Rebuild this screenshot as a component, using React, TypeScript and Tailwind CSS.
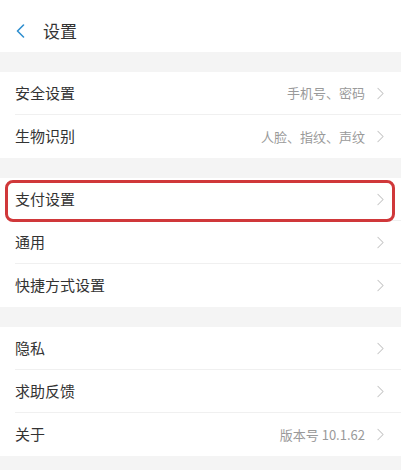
import React from 'react';

type Item = { label: string; value?: string; highlight?: boolean };

const groups: Item[][] = [
  [
    { label: '安全设置', value: '手机号、密码' },
    { label: '生物识别', value: '人脸、指纹、声纹' },
  ],
  [
    { label: '支付设置', highlight: true },
    { label: '通用' },
    { label: '快捷方式设置' },
  ],
  [
    { label: '隐私' },
    { label: '求助反馈' },
    { label: '关于', value: '版本号 10.1.62' },
  ],
];

const Chevron = ({ className }: { className?: string }) => (
  <svg viewBox="0 0 8 14" className={className} fill="none" stroke="currentColor" strokeWidth="1.2" strokeLinecap="round" strokeLinejoin="round">
    <path d="M1 1l6 6-6 6" />
  </svg>
);

const Row = ({ item, last }: { item: Item; last: boolean }) => (
  <div className="relative h-[43px] flex items-center pl-[15px]">
    {item.highlight && (
      <div className="absolute left-[5px] right-[6px] top-[2px] bottom-[-1px] rounded-[8px] border-[3px] border-[#d0383a] pointer-events-none" />
    )}
    <div className={`flex-1 h-full flex items-center pr-[17px] ${last ? '' : 'border-b border-[#f0f0f0]'}`}>
      <span className="flex-1 text-[15px] text-[#333333]">{item.label}</span>
      {item.value && <span className="text-[13px] text-[#9a9a9a] mr-[12px]">{item.value}</span>}
      <Chevron className="w-[7px] h-[13px] text-[#c4c4c4]" />
    </div>
  </div>
);

export default function App() {
  return (
    <div className="w-[401px] h-[470px] bg-[#f4f4f4] overflow-hidden" style={{ fontFamily: '"Noto Sans CJK SC", "Noto Sans", sans-serif' }}>
      <div className="h-[52px] bg-white flex items-center pl-[16px] pt-[9px]">
        <svg viewBox="0 0 9 14" className="w-[9px] h-[14px] text-[#2f8fcf]" fill="none" stroke="currentColor" strokeWidth="1.6" strokeLinecap="round" strokeLinejoin="round">
          <path d="M7.5 1L1.5 7l6 6" />
        </svg>
        <span className="ml-[18px] text-[17px] text-[#333333]">设置</span>
      </div>
      <div className="flex flex-col gap-[20px] pt-[20px]">
        {groups.map((g, gi) => (
          <div key={gi} className="bg-white">
            {g.map((item, i) => (
              <Row key={item.label} item={item} last={i === g.length - 1} />
            ))}
          </div>
        ))}
      </div>
    </div>
  );
}
